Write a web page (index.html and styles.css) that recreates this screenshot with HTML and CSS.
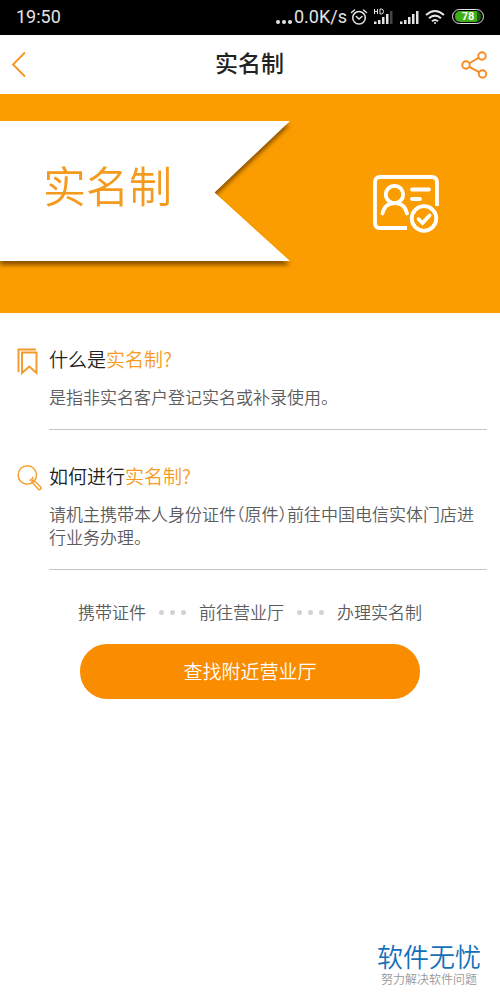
FILE: index.html
```html
<!DOCTYPE html>
<html lang="zh-CN">
<head>
<meta charset="utf-8">
<meta name="viewport" content="width=device-width, initial-scale=1">
<title>实名制</title>
<link rel="stylesheet" href="styles.css">
</head>
<body>
<div class="page">
  <div class="status">
    <span class="status-time">19:50</span>
    <div class="status-right">
      <svg class="more" width="17" height="20" viewBox="0 0 17 20" fill="#e4e4e4"><circle cx="3" cy="15" r="2"/><circle cx="9" cy="15" r="2"/><circle cx="15" cy="15" r="2"/></svg>
      <span class="speed">0.0K/s</span>
      <svg class="alarm" width="18" height="18" viewBox="0 0 18 18" fill="none" stroke="#e4e4e4" stroke-width="1.5" stroke-linecap="round"><circle cx="9" cy="9.8" r="6.3"/><path d="M1.5 4.5 4.5 2M16.500 4.500 13.500 2M6.300 8.500 9 11l3-2.500"/></svg>
      <svg class="signal-hd" width="20" height="18" viewBox="0 0 20 18"><path d="M1.500 1v5M4.500 1v5M1.500 3.500h3M7 1v5h1.300q2.200 0 2.200-2.500T8.300 1z" fill="none" stroke="#e4e4e4"/><path d="M1 16v-2.500h2.500V16zM5 16v-4h2.500v4zM9 16V9h2.500v7zM13 16V6h2.500v10z" fill="#e4e4e4"/><path d="M17 16V3h2.500v13z" fill="#444"/></svg>
      <svg class="signal" width="20" height="18" viewBox="0 0 20 18" fill="#e4e4e4"><path d="M1 16v-2.500h2.500V16zM5 16v-4h2.500v4zM9 16V9h2.500v7zM13 16V6h2.500v10zM17 16V3h2.500v13z"/></svg>
      <svg class="wifi" width="20" height="18" viewBox="0 0 20 18" fill="none" stroke="#e4e4e4" stroke-width="2"><path d="M1 7q9-8 18 0M4 10.300q6-5.400 12 0M7 13.300q3-2.700 6 0"/><circle cx="10" cy="15" r="1" fill="#e4e4e4" stroke="none"/></svg>
      <span class="battery"><span class="battery-level">78</span></span>
    </div>
  </div>

  <header class="bar">
    <button class="icon-button" type="button" aria-label="返回"><svg width="16" height="27" viewBox="0 0 16 27" fill="none" stroke="#f7931a" stroke-width="1.800"><path d="M14 1.500 2 13.500l12 12"/></svg></button>
    <h1 class="bar-title">实名制</h1>
    <button class="icon-button icon-button-end" type="button" aria-label="分享"><svg width="27" height="28" viewBox="0 0 27 28" fill="none" stroke="#f8891f" stroke-width="1.900"><circle cx="5" cy="14" r="3.700"/><circle cx="21" cy="5" r="3.700"/><circle cx="21.500" cy="23" r="3.700"/><path d="M8.300 12.200 17.700 6.800M8.300 15.900l9.800 5.300"/></svg></button>
  </header>

  <section class="hero">
    <div class="flag-shadow"><div class="flag">实名制</div></div>
    <div class="hero-icon">
      <svg width="67" height="60" viewBox="0 0 67 60" fill="none" stroke="#fff" stroke-width="3.800" stroke-linecap="round"><path d="M64 32V8q0-5-5-5H7Q2 3 2 8v41q0 5 5 5h27" stroke-linecap="butt"/><circle cx="21.500" cy="20.500" r="8.700"/><path d="M9.500 39.500q2-10 12-10.300t12.500 10.300M39 15.500h17M39 25h8"/><circle cx="51" cy="44.500" r="12.300"/><path d="m45.500 45 4 4 7-7.500"/></svg>
    </div>
  </section>

  <main class="content">
    <section class="item">
      <svg width="24" height="28" viewBox="0 0 24 28" fill="none" stroke="#f29a2b" stroke-width="1.900"><path d="M5 5.500h14.500V26L12.300 19.500 5 26z"/><path d="M1.500 25V2.500H19"/></svg>
      <div class="item-body">
        <h2 class="question">什么是<span class="accent">实名制?</span></h2>
        <p class="answer">是指非实名客户登记实名或补录使用。</p>
      </div>
    </section>
    <section class="item">
      <svg width="26" height="28" viewBox="0 0 26 28" fill="none" stroke="#f5a02f" stroke-width="1.500"><circle cx="10.300" cy="11" r="9.200"/><path d="M12.500 16.500q2.800-.8 3.700-3.700M15.500 18.200l2.500-2.500M15.300 18.500q-.8-.8 0-1.700t1.800 0l6.200 5.700q1.600 1.300.3 2.500t-2.500 0z"/></svg>
      <div class="item-body">
        <h2 class="question">如何进行<span class="accent">实名制?</span></h2>
        <p class="answer">请机主携带本人身份证件（原件）前往中国电信实体门店进行业务办理。</p>
      </div>
    </section>

    <div class="steps">
      <span>携带证件</span>
      <span class="dots"><i class="dot"></i><i class="dot"></i><i class="dot"></i></span>
      <span>前往营业厅</span>
      <span class="dots"><i class="dot"></i><i class="dot"></i><i class="dot"></i></span>
      <span>办理实名制</span>
    </div>
    <button class="primary" type="button">查找附近营业厅</button>
  </main>

  <footer class="brand">
    <div class="brand-name">软件无忧</div>
    <div class="brand-line">努力解决软件问题</div>
  </footer>
</div>
</body>
</html>
```
FILE: styles.css
```css
* { box-sizing: border-box; }
body {
  margin: 0;
  background: #fff;
  color: #222;
  font-family: "Noto Sans CJK SC", sans-serif;
  font-weight: 350;
}
h1, h2, p { margin: 0; }
svg { display: block; flex: none; }
button {
  border: 0;
  padding: 0;
  background: none;
  font-family: inherit;
  cursor: pointer;
}
.page {
  display: flex;
  flex-direction: column;
  min-height: 100vh;
}
.status {
  display: flex;
  justify-content: space-between;
  align-items: center;
  height: 35px;
  padding: 0 16px 2px;
  background: #000;
  color: #e4e4e4;
  font: 400 18px/32px Roboto, sans-serif;
}
.status-right {
  display: flex;
  align-items: center;
}
.more { margin-right: 2px; }
.speed { margin-right: 3px; }
.alarm { margin-right: 5px; }
.signal-hd { margin-right: 6px; }
.signal { margin-right: 6px; }
.wifi { margin-right: 7px; }
.battery {
  width: 32px;
  height: 15px;
  padding: 1px 2px;
  border: 1px solid #e4e4e4;
  border-radius: 8px;
}
.battery-level {
  display: block;
  border-radius: 5px;
  background: linear-gradient(90deg, #3fae18 85%, #1c5a0a 85%);
  color: #fff;
  font: 700 11px/11px Roboto, sans-serif;
  text-align: center;
}
.bar {
  display: grid;
  grid-template-columns: 40px 1fr 40px;
  align-items: center;
  height: 59px;
  padding: 0 12px 0 11px;
}
.bar-title {
  padding-bottom: 6px;
  font-size: 23px;
  line-height: 32px;
  font-weight: 500;
  text-align: center;
}
.icon-button { justify-self: start; }
.icon-button-end { justify-self: end; }
.hero {
  display: flex;
  padding: 27px 0 52px;
  background: #fb9d00;
}
.flag-shadow {
  width: 58%;
  filter: drop-shadow(0 4px 2px rgba(90, 50, 0, 0.7));
}
.flag {
  height: 140px;
  padding-left: 43px;
  background: #fff;
  clip-path: polygon(0 0, 100% 0, 74% 51%, 100% 100%, 0 100%);
  color: #f49a1e;
  font-size: 43px;
  line-height: 126px;
}
.hero-icon {
  display: flex;
  flex: 1;
  justify-content: center;
  padding: 53px 0 0 23px;
}
.content { padding-top: 34px; }
.item {
  display: grid;
  grid-template-columns: 24px 1fr;
  gap: 8px;
  margin: 0 13px 34px 17px;
}
.item-body {
  padding-bottom: 21px;
  border-bottom: 1px solid #c4c4c4;
}
.question {
  margin-bottom: 14px;
  font-size: 19px;
  line-height: 24px;
  font-weight: 350;
}
.accent { color: #f79a22; }
.answer {
  color: #5c5c5c;
  font-size: 17px;
  line-height: 23px;
  font-feature-settings: "halt";
}
.steps {
  display: flex;
  justify-content: center;
  gap: 13px;
  margin: -4px 0 20px;
  color: #5c5c5c;
  font-size: 17px;
  line-height: 24px;
}
.dots {
  display: flex;
  align-items: center;
  gap: 6px;
}
.dot {
  width: 5px;
  height: 5px;
  border-radius: 50%;
  background: #d2d2d2;
}
.primary {
  display: block;
  width: 68%;
  height: 55px;
  margin: 0 auto;
  padding-bottom: 2px;
  border-radius: 27px;
  background: #fa8c00;
  color: #fff;
  font-size: 19px;
  font-weight: 350;
}
.brand {
  align-self: flex-end;
  margin-top: auto;
  padding: 0 19px 12px 0;
  text-align: center;
}
.brand-name {
  color: #1470b8;
  font-size: 26px;
  line-height: 28px;
  font-weight: 350;
}
.brand-line {
  color: #999;
  font-size: 12px;
  line-height: 18px;
}
```
